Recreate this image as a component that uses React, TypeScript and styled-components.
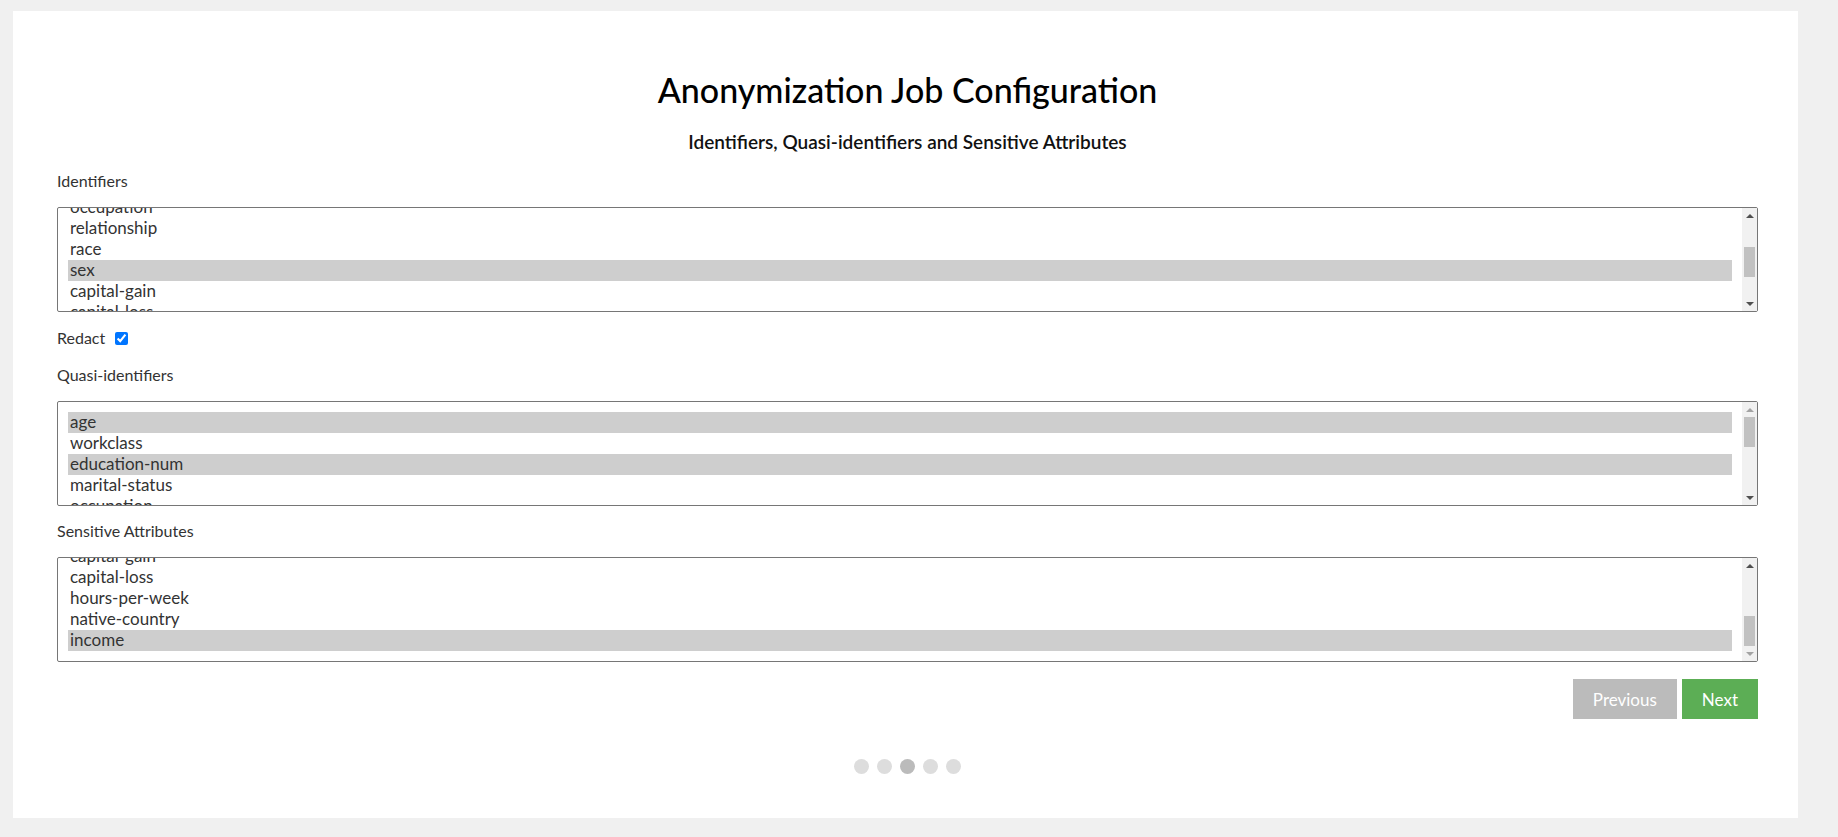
import React, { useEffect, useRef } from 'react';
import styled, { createGlobalStyle } from 'styled-components';

const GlobalStyle = createGlobalStyle`
  html, body {
    margin: 0;
    padding: 0;
    background-color: #f0f0f0;
    font-family: Lato, "Open Sans", sans-serif;
    color: #222;
  }
`;

const Card = styled.div`
  margin: 11px 40px 19px 13px;
  background-color: #fff;
  padding: 58px 40px 44px 44px;
  display: flex;
  flex-direction: column;
`;

const Title = styled.h1`
  margin: 0;
  text-align: center;
  font-size: 34px;
  line-height: 41px;
  font-weight: 500;
  color: #000;
`;

const SubTitle = styled.h2`
  margin: 20px 0 0 0;
  text-align: center;
  font-size: 19px;
  line-height: 24px;
  font-weight: 600;
  color: #111;
`;

const FieldLabel = styled.div<{ $top: number }>`
  font-size: 16px;
  line-height: 20px;
  color: #333;
  margin-top: ${props => props.$top}px;
  margin-bottom: 16px;
`;

const ListBox = styled.div`
  display: flex;
  height: 105px;
  box-sizing: border-box;
  border: 1px solid #767676;
  border-radius: 2px;
  background: #fff;
`;

const ListViewport = styled.div`
  flex: 1;
  overflow: hidden;
`;

const ListInner = styled.div`
  padding: 10px;
`;

const ListOption = styled.div<{ $selected?: boolean }>`
  height: 21px;
  box-sizing: border-box;
  padding: 0 2px 1px 2px;
  line-height: 20px;
  font-size: 17px;
  color: #333;
  background-color: ${props => (props.$selected ? '#cecece' : 'transparent')};
  white-space: nowrap;
`;

const ScrollBar = styled.div`
  width: 15px;
  display: flex;
  flex-direction: column;
  background-color: #f1f1f1;
`;

const ScrollButton = styled.div`
  height: 15px;
  display: flex;
  align-items: center;
  justify-content: center;
`;

const Arrow = styled.span<{ $dir: 'up' | 'down'; $disabled?: boolean }>`
  width: 0;
  height: 0;
  border-left: 4px solid transparent;
  border-right: 4px solid transparent;
  ${props =>
    props.$dir === 'up'
      ? `border-bottom: 4px solid ${props.$disabled ? '#a3a3a3' : '#505050'};`
      : `border-top: 4px solid ${props.$disabled ? '#a3a3a3' : '#505050'};`}
`;

const ScrollTrack = styled.div`
  flex: 1;
  display: flex;
  flex-direction: column;
  padding: 0 2px;
`;

const ScrollThumb = styled.div`
  height: 30px;
  background-color: #c1c1c1;
`;

const RedactRow = styled.label`
  display: flex;
  align-items: center;
  gap: 10px;
  margin-top: 16px;
  font-size: 16px;
  line-height: 20px;
  color: #333;
`;

const Checkbox = styled.input`
  margin: 0;
  width: 13px;
  height: 13px;
`;

const ButtonRow = styled.div`
  display: flex;
  justify-content: flex-end;
  gap: 5px;
  margin-top: 17px;
`;

const NavButton = styled.button<{ $primary?: boolean }>`
  height: 40px;
  padding: 0 20px;
  border: none;
  border-radius: 0;
  font-family: Lato, "Open Sans", sans-serif;
  font-size: 17px;
  color: #fff;
  background-color: ${props => (props.$primary ? '#5cae55' : '#bbbbbb')};
  cursor: pointer;
`;

const Dots = styled.div`
  display: flex;
  justify-content: center;
  gap: 8px;
  margin-top: 40px;
`;

const Dot = styled.span<{ $active?: boolean }>`
  width: 15px;
  height: 15px;
  border-radius: 50%;
  background-color: ${props => (props.$active ? '#bbbbbb' : '#dddddd')};
`;

const attributes = [
  'age',
  'workclass',
  'education-num',
  'marital-status',
  'occupation',
  'relationship',
  'race',
  'sex',
  'capital-gain',
  'capital-loss',
  'hours-per-week',
  'native-country',
  'income',
];

const ROW_HEIGHT = 21;
const BOX_INNER = 103;
const TRACK = BOX_INNER - 30;
const THUMB = 30;

interface AttributeListProps {
  selected: string[];
  scroll: number;
}

const AttributeList: React.FC<AttributeListProps> = ({ selected, scroll }) => {
  const viewportRef = useRef<HTMLDivElement | null>(null);
  const contentHeight = attributes.length * ROW_HEIGHT + 20;
  const maxScroll = contentHeight - BOX_INNER;
  const top = Math.min(scroll, maxScroll);
  const thumbOffset = (top / maxScroll) * (TRACK - THUMB);

  useEffect(() => {
    if (viewportRef.current) viewportRef.current.scrollTop = top;
  }, [top]);

  return (
    <ListBox role="listbox" aria-multiselectable>
      <ListViewport ref={viewportRef}>
        <ListInner>
          {attributes.map(a => (
            <ListOption key={a} role="option" $selected={selected.includes(a)}>
              {a}
            </ListOption>
          ))}
        </ListInner>
      </ListViewport>
      <ScrollBar>
        <ScrollButton>
          <Arrow $dir="up" $disabled={top <= 0} />
        </ScrollButton>
        <ScrollTrack>
          <ScrollThumb style={{ marginTop: thumbOffset }} />
        </ScrollTrack>
        <ScrollButton>
          <Arrow $dir="down" $disabled={top >= maxScroll} />
        </ScrollButton>
      </ScrollBar>
    </ListBox>
  );
};

const App: React.FC = () => {
  return (
    <>
      <GlobalStyle />
      <Card>
        <Title>Anonymization Job Configuration</Title>
        <SubTitle>Identifiers, Quasi-identifiers and Sensitive Attributes</SubTitle>

        <FieldLabel $top={17}>Identifiers</FieldLabel>
        <AttributeList selected={['sex']} scroll={105} />

        <RedactRow>
          Redact
          <Checkbox type="checkbox" defaultChecked />
        </RedactRow>

        <FieldLabel $top={17}>Quasi-identifiers</FieldLabel>
        <AttributeList selected={['age', 'education-num']} scroll={0} />

        <FieldLabel $top={15}>Sensitive Attributes</FieldLabel>
        <AttributeList selected={['income']} scroll={1000} />

        <ButtonRow>
          <NavButton>Previous</NavButton>
          <NavButton $primary>Next</NavButton>
        </ButtonRow>

        <Dots>
          {[0, 1, 2, 3, 4].map(i => (
            <Dot key={i} $active={i === 2} />
          ))}
        </Dots>
      </Card>
    </>
  );
};

export default App;
